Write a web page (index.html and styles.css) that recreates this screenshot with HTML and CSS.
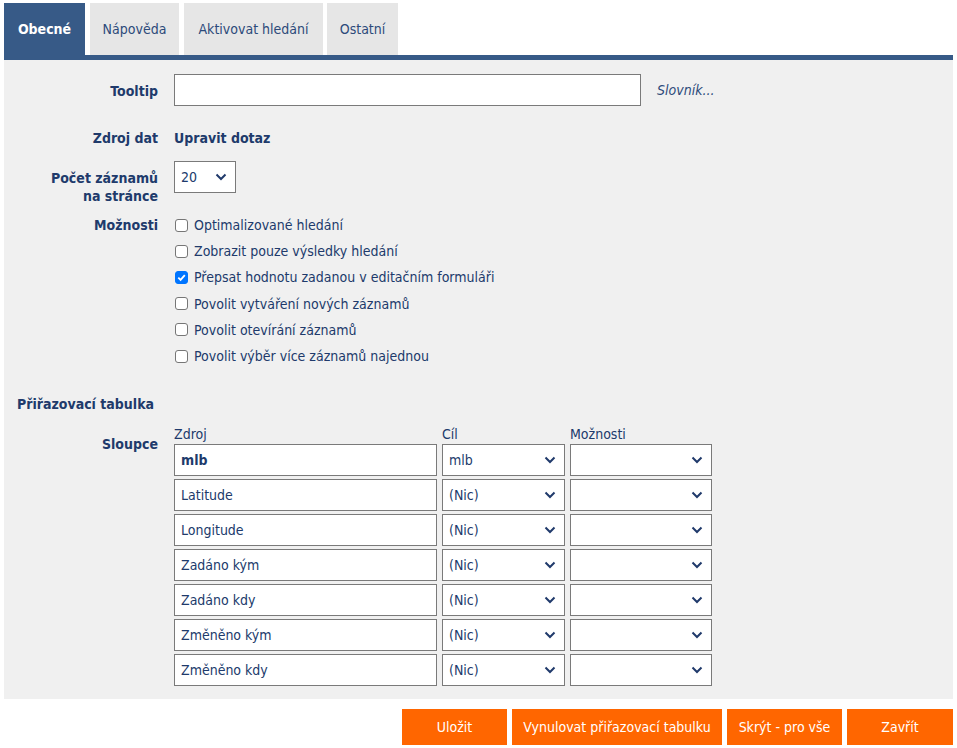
FILE: index.html
```
<!DOCTYPE html>
<html>
<head>
    <title>Nastavení pole</title>
    <link rel="stylesheet" href="styles.css">
</head>
<body>
    <div class="tabs">
        <div class="tab tab-general active">Obecné</div>
        <div class="tab tab-help">Nápověda</div>
        <div class="tab tab-search">Aktivovat hledání</div>
        <div class="tab tab-other">Ostatní</div>
    </div>
    <div class="panel">
        <div class="row row-tooltip">
            <div class="label">Tooltip</div>
            <div class="field">
                <input type="text" class="text-input tooltip-input">
                <a class="dict-link">Slovník...</a>
            </div>
        </div>
        <div class="row row-source">
            <div class="label">Zdroj dat</div>
            <div class="field"><span class="strong-link">Upravit dotaz</span></div>
        </div>
        <div class="row row-count">
            <div class="label">Počet záznamů<br>na stránce</div>
            <div class="field">
                <div class="select small-select"><span>20</span><svg viewBox="0 0 12 8"><path d="M1.5 1.5 6 6l4.5-4.5" /></svg></div>
            </div>
        </div>
        <div class="row row-options">
            <div class="label">Možnosti</div>
            <div class="field checks">
                <label class="check"><span class="box"></span>Optimalizované hledání</label>
                <label class="check"><span class="box"></span>Zobrazit pouze výsledky hledání</label>
                <label class="check"><span class="box checked"><svg viewBox="0 0 12 12"><path d="M2.5 6.2 5 8.6 9.6 3.4" /></svg></span>Přepsat hodnotu zadanou v editačním formuláři</label>
                <label class="check"><span class="box"></span>Povolit vytváření nových záznamů</label>
                <label class="check"><span class="box"></span>Povolit otevírání záznamů</label>
                <label class="check"><span class="box"></span>Povolit výběr více záznamů najednou</label>
            </div>
        </div>

        <h3 class="section">Přiřazovací tabulka</h3>

        <div class="row row-columns">
            <div class="label">Sloupce</div>
            <div class="field">
                <div class="map-grid">
                    <div class="head">Zdroj</div>
                    <div class="head">Cíl</div>
                    <div class="head">Možnosti</div>

                    <div class="cell bold">mlb</div>
                    <div class="select"><span>mlb</span><svg viewBox="0 0 12 8"><path d="M1.5 1.5 6 6l4.5-4.5" /></svg></div>
                    <div class="select"><span></span><svg viewBox="0 0 12 8"><path d="M1.5 1.5 6 6l4.5-4.5" /></svg></div>

                    <div class="cell">Latitude</div>
                    <div class="select"><span>(Nic)</span><svg viewBox="0 0 12 8"><path d="M1.5 1.5 6 6l4.5-4.5" /></svg></div>
                    <div class="select"><span></span><svg viewBox="0 0 12 8"><path d="M1.5 1.5 6 6l4.5-4.5" /></svg></div>

                    <div class="cell">Longitude</div>
                    <div class="select"><span>(Nic)</span><svg viewBox="0 0 12 8"><path d="M1.5 1.5 6 6l4.5-4.5" /></svg></div>
                    <div class="select"><span></span><svg viewBox="0 0 12 8"><path d="M1.5 1.5 6 6l4.5-4.5" /></svg></div>

                    <div class="cell">Zadáno kým</div>
                    <div class="select"><span>(Nic)</span><svg viewBox="0 0 12 8"><path d="M1.5 1.5 6 6l4.5-4.5" /></svg></div>
                    <div class="select"><span></span><svg viewBox="0 0 12 8"><path d="M1.5 1.5 6 6l4.5-4.5" /></svg></div>

                    <div class="cell">Zadáno kdy</div>
                    <div class="select"><span>(Nic)</span><svg viewBox="0 0 12 8"><path d="M1.5 1.5 6 6l4.5-4.5" /></svg></div>
                    <div class="select"><span></span><svg viewBox="0 0 12 8"><path d="M1.5 1.5 6 6l4.5-4.5" /></svg></div>

                    <div class="cell">Změněno kým</div>
                    <div class="select"><span>(Nic)</span><svg viewBox="0 0 12 8"><path d="M1.5 1.5 6 6l4.5-4.5" /></svg></div>
                    <div class="select"><span></span><svg viewBox="0 0 12 8"><path d="M1.5 1.5 6 6l4.5-4.5" /></svg></div>

                    <div class="cell">Změněno kdy</div>
                    <div class="select"><span>(Nic)</span><svg viewBox="0 0 12 8"><path d="M1.5 1.5 6 6l4.5-4.5" /></svg></div>
                    <div class="select"><span></span><svg viewBox="0 0 12 8"><path d="M1.5 1.5 6 6l4.5-4.5" /></svg></div>
                </div>
            </div>
        </div>
    </div>
    <div class="buttons">
        <button class="btn btn-save">Uložit</button>
        <button class="btn btn-reset">Vynulovat přiřazovací tabulku</button>
        <button class="btn btn-hide">Skrýt - pro vše</button>
        <button class="btn btn-close">Zavřít</button>
    </div>
</body>
</html>
```

FILE: styles.css
```
body {
    margin: 3px 4px 0 4px;
    font-family: "DejaVu Sans Condensed", "DejaVu Sans", sans-serif;
    font-size: 14px;
    color: #203a6b;
    background: #fff;
}
.tabs {
    display: flex;
    border-bottom: 5px solid #375a87;
}
.tab {
    height: 52px;
    line-height: 52px;
    text-align: center;
    background-color: #e6e6e6;
    color: #2c4a7a;
}
.tab.active {
    background-color: #375a87;
    color: #fff;
    font-weight: bold;
}
.tab-general { width: 81px; margin-right: 5px; }
.tab-help { width: 89px; margin-right: 5px; }
.tab-search { width: 139px; margin-right: 4px; }
.tab-other { width: 71px; }
.panel {
    background-color: #f0f0f0;
    padding: 14px 0 12px 0;
    height: 613px;
}
.row {
    display: flex;
}
.label {
    width: 154px;
    text-align: right;
    font-weight: bold;
    padding-right: 16px;
    line-height: 18px;
}
.field {
    flex: 1;
}
.row-tooltip .label { padding-top: 8px; }
.row-tooltip .field {
    display: flex;
    align-items: center;
}
.text-input {
    box-sizing: border-box;
    height: 32px;
    border: 1px solid #7a7a7a;
    background: #fff;
}
.tooltip-input {
    width: 467px;
}
.dict-link {
    margin-left: 16px;
    font-style: italic;
    color: #2c4a7a;
}
.row-source {
    margin-top: 23px;
}
.strong-link {
    font-weight: bold;
    line-height: 18px;
}
.row-count {
    margin-top: 14px;
}
.row-count .label { padding-top: 8px; }
.select {
    box-sizing: border-box;
    height: 32px;
    border: 1px solid #7a7a7a;
    background: #fff;
    display: flex;
    align-items: center;
    justify-content: space-between;
    padding: 0 8px 0 6px;
}
.select svg {
    width: 12px;
    height: 8px;
    fill: none;
    stroke: #203a6b;
    stroke-width: 2;
}
.small-select {
    width: 62px;
}
.row-options {
    margin-top: 11px;
}
.checks {
    display: flex;
    flex-direction: column;
    margin-top: -4px;
}
.check {
    display: flex;
    align-items: center;
    height: 26.2px;
}
.box {
    box-sizing: border-box;
    width: 13px;
    height: 13px;
    border: 1px solid #767676;
    border-radius: 3px;
    background: #fff;
    margin-left: 1px;
    margin-right: 6px;
    display: flex;
}
.box.checked {
    background: #0075ff;
    border-color: #0075ff;
}
.box svg {
    width: 11px;
    height: 11px;
    fill: none;
    stroke: #fff;
    stroke-width: 2;
}
.section {
    margin: 26px 0 0 13px;
    font-size: 14px;
    font-weight: bold;
    line-height: 18px;
}
.row-columns {
    margin-top: 14px;
}
.row-columns .label { padding-top: 8px; }
.map-grid {
    display: grid;
    grid-template-columns: 263px 123px 142px;
    column-gap: 5px;
    row-gap: 3px;
}
.head {
    line-height: 14px;
    margin-bottom: 0;
}
.cell {
    box-sizing: border-box;
    height: 32px;
    line-height: 30px;
    border: 1px solid #7a7a7a;
    background: #fff;
    padding: 0 6px;
}
.cell.bold { font-weight: bold; }
.buttons {
    display: flex;
    justify-content: flex-end;
    gap: 5px;
    margin-top: 10px;
}
.btn {
    height: 36px;
    background-color: #ff6600;
    color: #fff;
    border: none;
    font-family: "DejaVu Sans Condensed", "DejaVu Sans", sans-serif;
    font-size: 14px;
    padding: 0 6px;
}
.btn-save { width: 105px; }
.btn-reset { width: 210px; }
.btn-hide { width: 115px; }
.btn-close { width: 106px; }
```
